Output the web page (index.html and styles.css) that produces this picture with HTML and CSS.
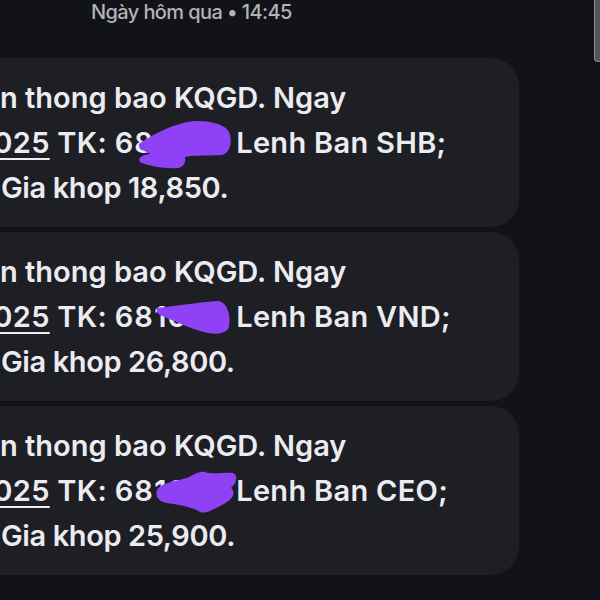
FILE: index.html
```html
<!DOCTYPE html>
<html lang="vi">
<head>
<meta charset="utf-8">
<title>Tin nhắn</title>
<link rel="stylesheet" href="styles.css">
</head>
<body>
<div class="screen">
  <div class="scroll-thumb"></div>
  <div class="stamp">Ngày hôm qua • 14:45</div>
  <div class="thread">
    <div class="bubble">
      <div class="line">n thong bao KQGD. Ngay</div>
      <div class="line l2"><span class="date">2025</span> TK: <span class="acct">681000</span> Lenh Ban SHB;</div>
      <div class="line l3">Gia khop 18,850.</div>
      <svg class="scribble" viewBox="0 0 519 169" width="519" height="169">
        <path d="M139,86 C150,78 175,64 196,63 C210,63 225,66 229,74 C233,84 230,95 222,97 C205,98 190,97 185,99 C186,104 184,109 178,110 C165,111 148,108 140,104 C137,100 142,97 150,96 C146,93 138,92 139,86 Z"/>
      </svg>
    </div>
    <div class="bubble">
      <div class="line">n thong bao KQGD. Ngay</div>
      <div class="line l2"><span class="date">2025</span> TK: <span class="acct">681000</span> Lenh Ban VND;</div>
      <div class="line l3">Gia khop 26,800.</div>
      <svg class="scribble" viewBox="0 0 519 169" width="519" height="169">
        <path d="M156,76 C175,74 200,70 218,69 C228,70 231,85 229,95 C227,101 218,103 208,101 C190,97 172,88 158,82 Z"/>
      </svg>
    </div>
    <div class="bubble">
      <div class="line">n thong bao KQGD. Ngay</div>
      <div class="line l2"><span class="date">2025</span> TK: <span class="acct">681000</span> Lenh Ban CEO;</div>
      <div class="line l3">Gia khop 25,900.</div>
      <svg class="scribble" viewBox="0 0 519 169" width="519" height="169">
        <path d="M157,84 C160,78 170,76 187,72 C195,68 200,65 205,66 C212,69 225,66 233,67 C239,70 236,78 231,82 C236,86 234,93 222,99 C212,104 206,108 200,106 C193,101 180,99 167,97 C158,95 155,90 157,84 Z"/>
      </svg>
    </div>
  </div>
</div>
</body>
</html>
```
FILE: styles.css
```css
html, body {
  margin: 0;
  padding: 0;
  background: #121318;
}
body {
  font-family: Inter, "Noto Sans", sans-serif;
  color: #ececf0;
  overflow: hidden;
}
.screen {
  position: relative;
  width: 600px;
  height: 600px;
  overflow: hidden;
  background: #121318;
}
.scroll-thumb {
  position: absolute;
  top: -10px;
  right: 0;
  width: 5px;
  height: 70px;
  background: #55565c;
  border: 1px solid #8a8a90;
  border-right: none;
  border-radius: 0 0 0 4px;
}
.stamp {
  padding-left: 91px;
  font-size: 20px;
  font-weight: 500;
  letter-spacing: -0.6px;
  line-height: 24px;
  color: #b2b2b8;
  height: 24px;
}
.thread {
  margin-top: 34px;
  display: flex;
  flex-direction: column;
  gap: 5px;
}
.bubble {
  position: relative;
  box-sizing: border-box;
  width: 559px;
  margin-left: -40px;
  padding: 17px 0 17px 40px;
  background: #1e1f24;
  border-radius: 28px;
}
.line {
  font-size: 29px;
  font-weight: 600;
  letter-spacing: 0;
  line-height: 45px;
  white-space: nowrap;
}
.l2 {
  margin-left: -25px;
  letter-spacing: 0.3px;
}
.acct {
  letter-spacing: 1.2px;
}
.l3 {
  margin-left: 1px;
  letter-spacing: -0.4px;
}
.date {
  text-decoration: underline;
  text-decoration-thickness: 2px;
  text-underline-offset: 5px;
}
.scribble {
  position: absolute;
  left: 40px;
  top: 0;
  fill: #8f41f6;
}
```
